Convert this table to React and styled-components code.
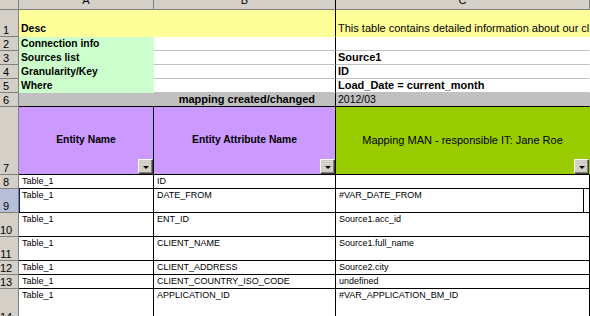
import React from "react";
import styled, { createGlobalStyle } from "styled-components";

const GlobalStyle = createGlobalStyle`
  html, body {
    margin: 0;
    padding: 0;
    background: #ffffff;
  }
  body {
    font-family: "Liberation Sans", Arial, sans-serif;
    color: #000000;
  }
`;

const YELLOW = "#ffff99";
const GREEN = "#ccffcc";
const PURPLE = "#cc99ff";
const LIME = "#99cc00";
const GREY = "#c0c0c0";
const FACE = "#d4d0c8";

const Sheet = styled.div`
  display: grid;
  grid-template-columns: 19px 135px 182px 254px;
  grid-template-rows: 10px 27px repeat(5, 14px) 68px 14px repeat(3, 24px) 14px 14px 35px;
  width: 590px;
  height: 316px;
  overflow: hidden;
  background: #ffffff;
`;

const Corner = styled.div`
  background: ${FACE};
  border-right: 1px solid #808080;
  border-bottom: 1px solid #808080;
`;

const ColHead = styled.div`
  display: flex;
  align-items: flex-end;
  justify-content: center;
  overflow: hidden;
  background: ${FACE};
  border-right: 1px solid ${(p) => p.$edge || "#808080"};
  border-bottom: 1px solid #808080;
  font-size: 11px;
  line-height: 11px;
  padding-bottom: 3px;
`;

const RowHead = styled.div`
  display: flex;
  align-items: flex-end;
  justify-content: center;
  overflow: hidden;
  background: ${(p) => (p.$active ? "#b6bed8" : FACE)};
  border-right: 1px solid #808080;
  border-bottom: 1px solid #808080;
  padding-right: 6px;
  font-size: 11px;
  line-height: 11px;
`;

const Cell = styled.div`
  position: relative;
  display: flex;
  min-width: 0;
  overflow: hidden;
  white-space: nowrap;
  grid-column: span ${(p) => p.$span || 1};
  background: ${(p) => p.$bg || "#ffffff"};
  border-right: 1px solid ${(p) => p.$edge || p.$bg || "#ffffff"};
  border-bottom: 1px solid ${(p) => p.$line || p.$bg || "#ffffff"};
  align-items: ${(p) =>
    p.$valign === "top" ? "flex-start" : p.$valign === "middle" ? "center" : "flex-end"};
  justify-content: ${(p) =>
    p.$align === "center" ? "center" : p.$align === "right" ? "flex-end" : "flex-start"};
  padding: ${(p) => p.$pad || "0 2px 1px 2px"};
  font-size: ${(p) => p.$size || 10}px;
  line-height: ${(p) => (p.$size || 10) + 1}px;
  font-weight: ${(p) => (p.$bold ? 700 : 400)};
  box-shadow: ${(p) => (p.$mark ? "inset 1px 0 0 #0a246a" : "none")};

  ${(p) =>
    p.$selected &&
    `
    &::after {
      content: "";
      position: absolute;
      top: 0;
      bottom: 0;
      right: 5px;
      width: 1px;
      background: #000000;
    }
  `}
`;

const DataCell = styled(Cell).attrs({ $valign: "top", $size: 9 })`
  border-right-color: #000000;
  border-bottom-color: #000000;
  padding: 1px 3px 0 3px;
  line-height: 10px;
`;

// autofilter drop-down in the corner of a header cell
const FilterButton = styled.span`
  position: absolute;
  right: 0;
  bottom: 0;
  width: 15px;
  height: 15px;
  box-sizing: border-box;
  display: flex;
  align-items: center;
  justify-content: center;
  background: ${FACE};
  border-top: 1px solid #ffffff;
  border-left: 1px solid #ffffff;
  border-right: 1px solid #404040;
  border-bottom: 1px solid #404040;
  box-shadow: inset -1px -1px 0 #808080;

  &::before {
    content: "";
    border-left: 3px solid transparent;
    border-right: 3px solid transparent;
    border-top: 3px solid #000000;
    margin-top: 1px;
  }
`;

const infoRows = [
  { n: 2, label: "Connection info", value: "" },
  { n: 3, label: "Sources list", value: "Source1" },
  { n: 4, label: "Granularity/Key", value: "ID" },
  { n: 5, label: "Where", value: "Load_Date = current_month" },
];

const mappings = [
  { n: 8, attr: "ID", source: "" },
  { n: 9, attr: "DATE_FROM", source: "#VAR_DATE_FROM", active: true },
  { n: 10, attr: "ENT_ID", source: "Source1.acc_id" },
  { n: 11, attr: "CLIENT_NAME", source: "Source1.full_name" },
  { n: 12, attr: "CLIENT_ADDRESS", source: "Source2.city" },
  { n: 13, attr: "CLIENT_COUNTRY_ISO_CODE", source: "undefined" },
  { n: 14, attr: "APPLICATION_ID", source: "#VAR_APPLICATION_BM_ID" },
];

export default function App() {
  return (
    <>
      <GlobalStyle />
      <Sheet>
        <Corner />
        <ColHead>A</ColHead>
        <ColHead $edge="#000000">B</ColHead>
        <ColHead>C</ColHead>

        <RowHead>1</RowHead>
        <Cell $bg={YELLOW} $bold $size={10.5} $pad="0 2px 2px 2px">Desc</Cell>
        <Cell $bg={YELLOW} $edge="#000000" />
        <Cell $bg={YELLOW} $size={11} $pad="0 2px 2px 2px">
          This table contains detailed information about our clients
        </Cell>

        {infoRows.map((r) => (
          <React.Fragment key={r.n}>
            <RowHead>{r.n}</RowHead>
            <Cell $bg={GREEN} $bold $size={10.3}>{r.label}</Cell>
            <Cell $line={GREY} $edge="#000000" />
            <Cell $line={GREY} $bold $size={11}>{r.value}</Cell>
          </React.Fragment>
        ))}

        <RowHead>6</RowHead>
        <Cell $span={2} $bg={GREY} $edge="#000000" $line="#000000" $bold $size={11} $align="right" $pad="0 20px 1px 2px">
          mapping created/changed
        </Cell>
        <Cell $bg={GREY} $line="#000000" $size={10.5}>2012/03</Cell>

        <RowHead>7</RowHead>
        <Cell $bg={PURPLE} $edge="#000000" $line="#000000" $bold $size={10.3} $align="center" $valign="middle">
          Entity Name
          <FilterButton />
        </Cell>
        <Cell $bg={PURPLE} $edge="#000000" $line="#000000" $bold $size={10.3} $align="center" $valign="middle">
          Entity Attribute Name
          <FilterButton />
        </Cell>
        <Cell $bg={LIME} $line="#000000" $size={11} $align="center" $valign="middle">
          Mapping MAN - responsible IT: Jane Roe
          <FilterButton />
        </Cell>

        {mappings.map((m) => (
          <React.Fragment key={m.n}>
            <RowHead $active={m.active}>{m.n}</RowHead>
            <DataCell $mark={m.active}>Table_1</DataCell>
            <DataCell>{m.attr}</DataCell>
            <DataCell $selected={m.active} $edge="#ffffff">{m.source}</DataCell>
          </React.Fragment>
        ))}
      </Sheet>
    </>
  );
}
